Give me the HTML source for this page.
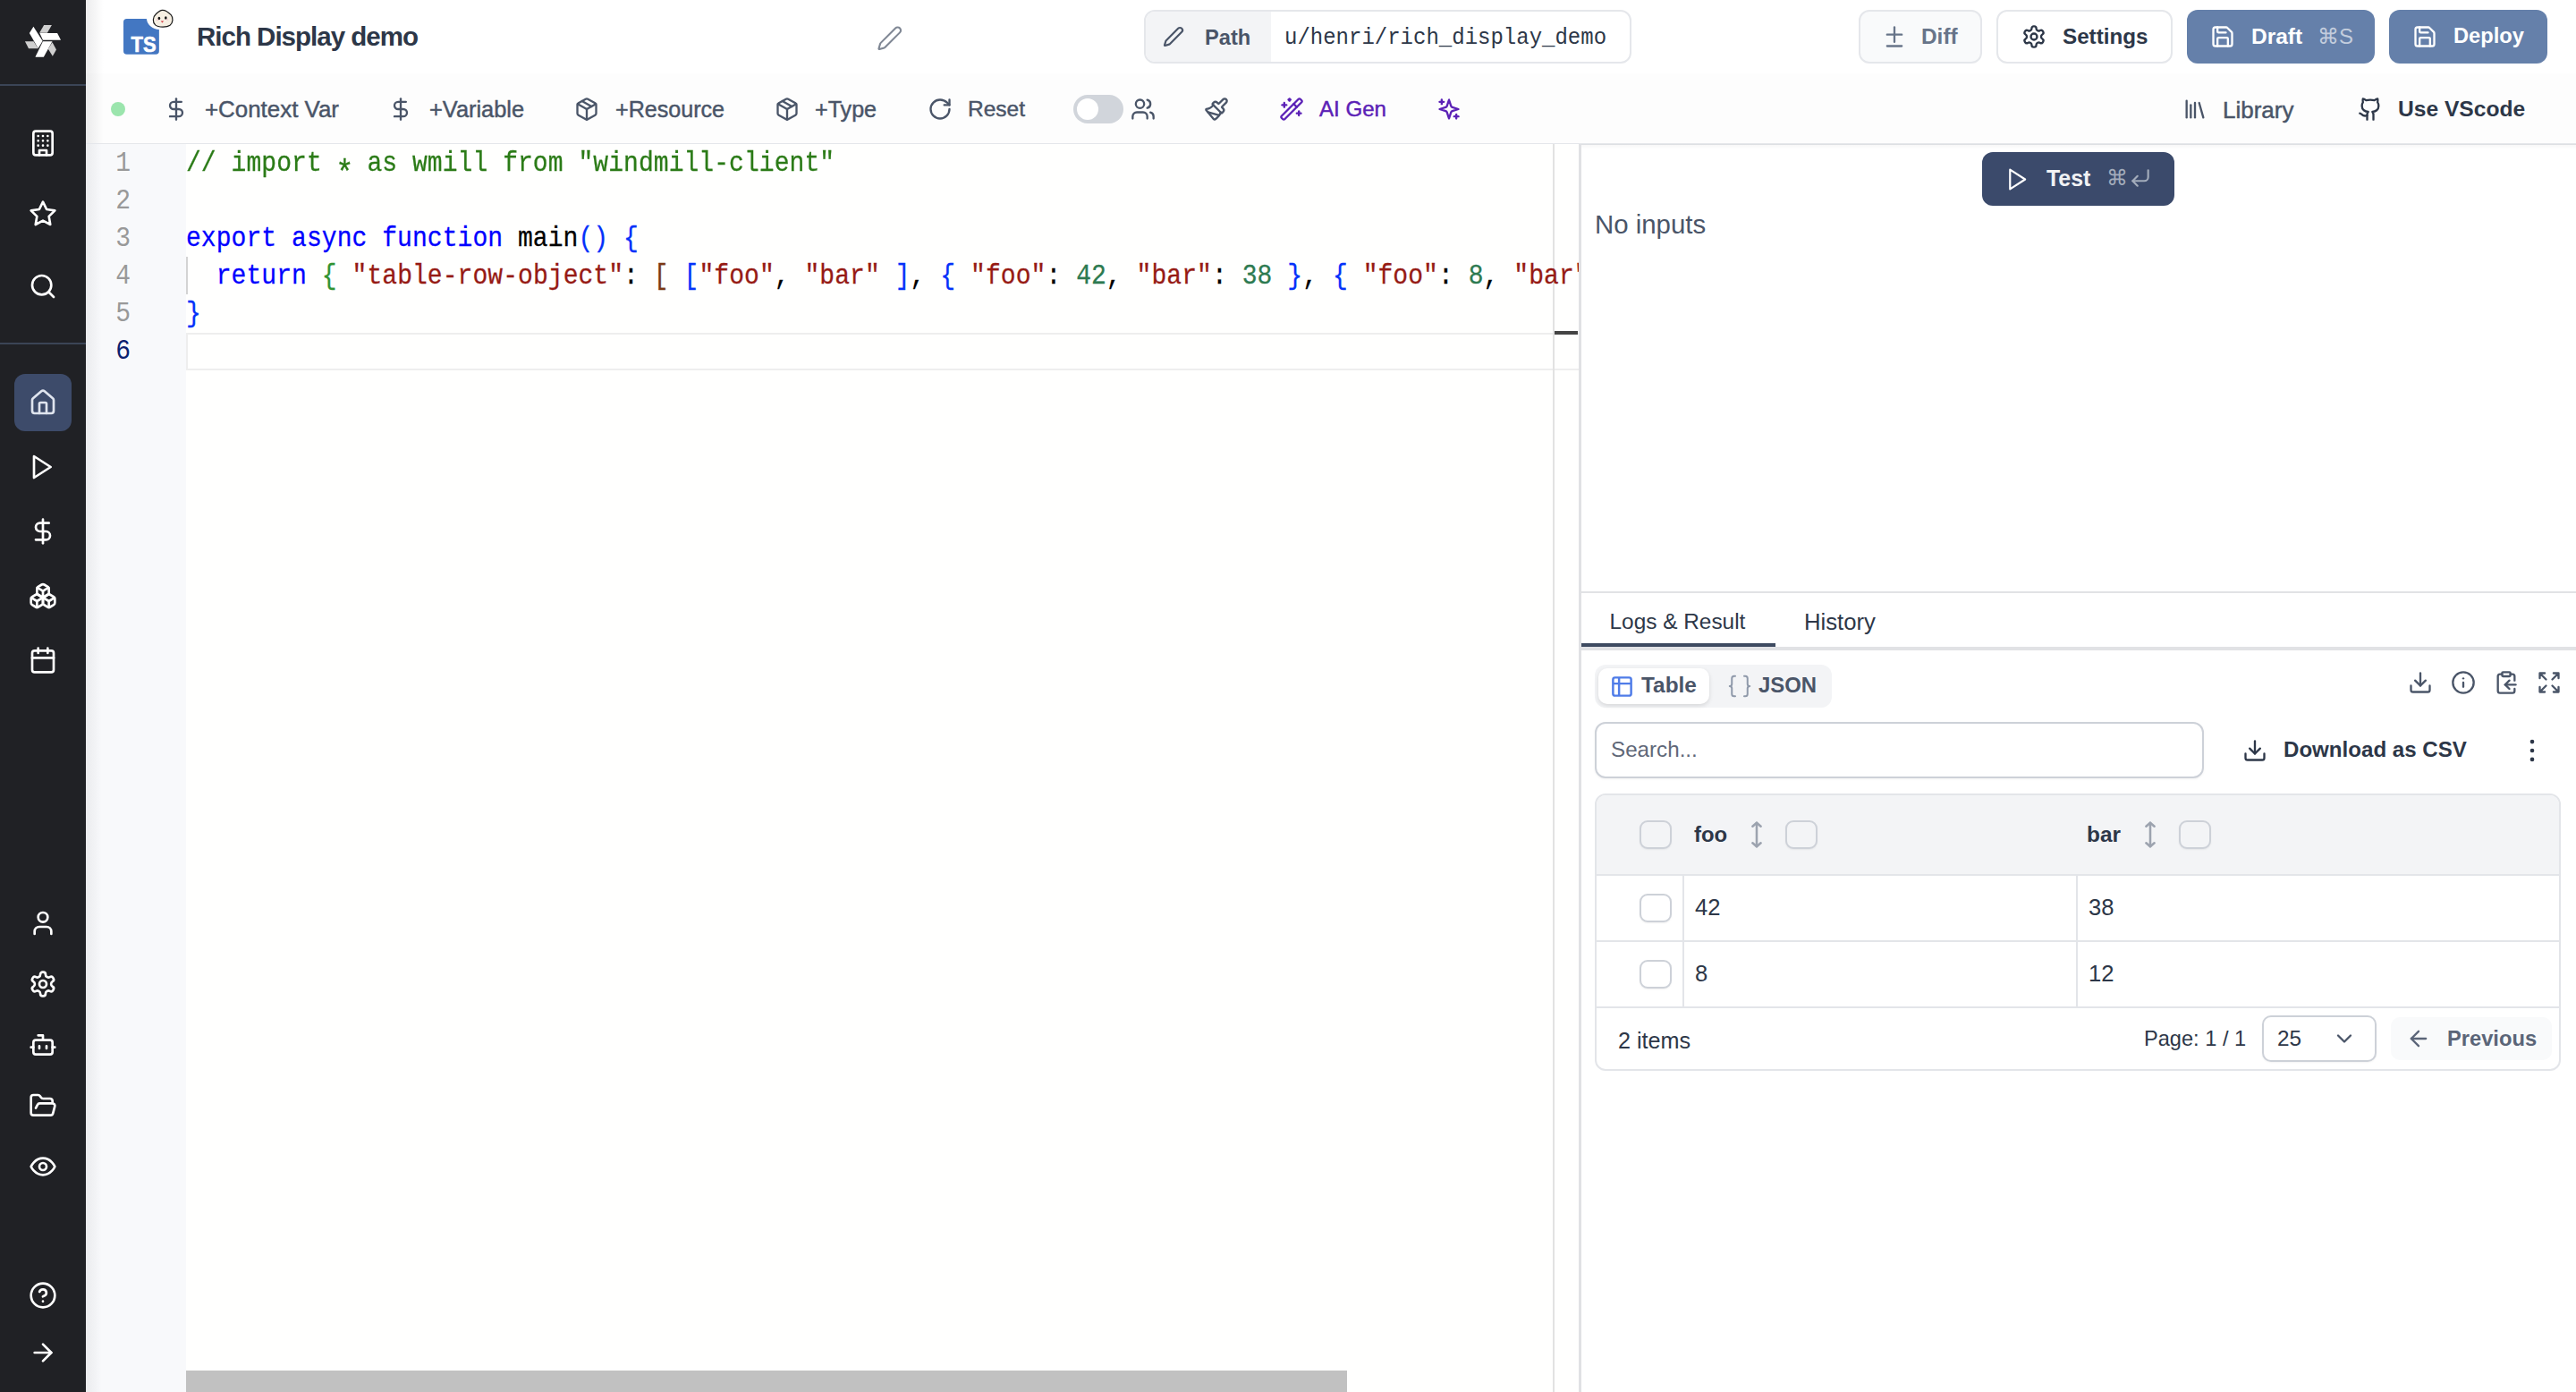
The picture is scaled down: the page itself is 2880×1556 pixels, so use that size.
<!DOCTYPE html>
<html><head><meta charset="utf-8">
<style>
*{box-sizing:border-box;margin:0;padding:0}
html,body{width:2880px;height:1556px;overflow:hidden;background:#fff;font-family:"Liberation Sans",sans-serif}
.a{position:absolute}
.t{position:absolute;white-space:nowrap;line-height:1}
.m{font-family:"Liberation Mono",monospace}
.b{font-weight:bold}
svg.i{position:absolute;fill:none;stroke:currentColor;stroke-linecap:round;stroke-linejoin:round}
</style></head><body>
<!-- SIDEBAR -->
<div class="a" style="left:0;top:0;width:96px;height:1556px;background:#202125"></div>
<div class="a" style="left:96px;top:0;width:20px;height:1556px;background:linear-gradient(to right,rgba(20,20,30,0.08),rgba(20,20,30,0))"></div>
<div class="a" style="left:0;top:94px;width:96px;height:2px;background:#3b4556"></div>
<div class="a" style="left:0;top:383px;width:96px;height:2px;background:#3b4556"></div>
<svg class="a" style="left:20px;top:20px" width="56" height="52" viewBox="0 0 1499 1392">
<g stroke="none">
<polygon fill="#fff" points="465,262 740,688 605,908 345,455"/>
<polygon fill="#cfcfcf" points="780,212 1015,212 880,448 645,448"/>
<polygon fill="#fff" points="652,455 1180,455 1285,662 748,662"/>
<polygon fill="#cfcfcf" points="212,700 470,700 605,915 322,915"/>
<polygon fill="#fff" points="748,705 1030,705 772,1172 520,1172"/>
<polygon fill="#cfcfcf" points="1030,730 1150,950 1040,1142 905,928"/>
</g></svg>
<svg class="i" style="left:32px;top:144px;color:#fff" width="32" height="32" viewBox="0 0 24 24" stroke-width="2"><rect width="16" height="20" x="4" y="2" rx="2" ry="2"/><path d="M9 22v-4h6v4"/><path d="M8 6h.01M16 6h.01M12 6h.01M12 10h.01M12 14h.01M16 10h.01M16 14h.01M8 10h.01M8 14h.01"/></svg>
<svg class="i" style="left:32px;top:223px;color:#fff" width="32" height="32" viewBox="0 0 24 24" stroke-width="2"><polygon points="12 2 15.09 8.26 22 9.27 17 14.14 18.18 21.02 12 17.77 5.82 21.02 7 14.14 2 9.27 8.91 8.26 12 2"/></svg>
<svg class="i" style="left:32px;top:304px;color:#fff" width="32" height="32" viewBox="0 0 24 24" stroke-width="2"><circle cx="11" cy="11" r="8"/><path d="m21 21-4.3-4.3"/></svg>
<div class="a" style="left:16px;top:418px;width:64px;height:64px;border-radius:12px;background:#3d4b6a"></div>
<svg class="i" style="left:32px;top:434px;color:#dfe4ee" width="32" height="32" viewBox="0 0 24 24" stroke-width="2"><path d="M15 21v-8a1 1 0 0 0-1-1h-4a1 1 0 0 0-1 1v8"/><path d="M3 10a2 2 0 0 1 .709-1.528l7-5.999a2 2 0 0 1 2.582 0l7 5.999A2 2 0 0 1 21 10v9a2 2 0 0 1-2 2H5a2 2 0 0 1-2-2z"/></svg>
<svg class="i" style="left:30px;top:506px;color:#fff" width="32" height="32" viewBox="0 0 24 24" stroke-width="2"><polygon points="6 3 20 12 6 21 6 3"/></svg>
<svg class="i" style="left:32px;top:578px;color:#fff" width="32" height="32" viewBox="0 0 24 24" stroke-width="2"><line x1="12" x2="12" y1="2" y2="22"/><path d="M17 5H9.5a3.5 3.5 0 0 0 0 7h5a3.5 3.5 0 0 1 0 7H6"/></svg>
<svg class="i" style="left:32px;top:650px;color:#fff" width="32" height="32" viewBox="0 0 24 24" stroke-width="2"><path d="M2.97 12.92A2 2 0 0 0 2 14.63v3.24a2 2 0 0 0 .97 1.710l3 1.8a2 2 0 0 0 2.06 0L12 19v-5.5l-5-3-4.03 2.42Z"/><path d="m7 16.5-4.74-2.85"/><path d="m7 16.5 5-3"/><path d="M7 16.5v5.17"/><path d="M12 13.5V19l3.97 2.38a2 2 0 0 0 2.06 0l3-1.8a2 2 0 0 0 .97-1.71v-3.24a2 2 0 0 0-.97-1.71L17 10.5l-5 3Z"/><path d="m17 16.5-5-3"/><path d="m17 16.5 4.74-2.85"/><path d="M17 16.5v5.17"/><path d="M7.97 4.42A2 2 0 0 0 7 6.130v4.37l5 3 5-3V6.13a2 2 0 0 0-.97-1.71l-3-1.8a2 2 0 0 0-2.06 0l-3 1.8Z"/><path d="M12 8 7.26 5.15"/><path d="m12 8 4.74-2.85"/><path d="M12 13.5V8"/></svg>
<svg class="i" style="left:32px;top:722px;color:#fff" width="32" height="32" viewBox="0 0 24 24" stroke-width="2"><rect width="18" height="18" x="3" y="4" rx="2" ry="2"/><line x1="16" x2="16" y1="2" y2="6"/><line x1="8" x2="8" y1="2" y2="6"/><line x1="3" x2="21" y1="10" y2="10"/></svg>
<svg class="i" style="left:32px;top:1016px;color:#fff" width="32" height="32" viewBox="0 0 24 24" stroke-width="2"><path d="M19 21v-2a4 4 0 0 0-4-4H9a4 4 0 0 0-4 4v2"/><circle cx="12" cy="7" r="4"/></svg>
<svg class="i" style="left:32px;top:1084px;color:#fff" width="32" height="32" viewBox="0 0 24 24" stroke-width="2"><path d="M12.22 2h-.44a2 2 0 0 0-2 2v.18a2 2 0 0 1-1 1.73l-.43.25a2 2 0 0 1-2 0l-.15-.08a2 2 0 0 0-2.73.73l-.22.38a2 2 0 0 0 .73 2.73l.15.1a2 2 0 0 1 1 1.72v.51a2 2 0 0 1-1 1.74l-.15.09a2 2 0 0 0-.73 2.730l.22.38a2 2 0 0 0 2.73.73l.15-.08a2 2 0 0 1 2 0l.43.25a2 2 0 0 1 1 1.73V20a2 2 0 0 0 2 2h.44a2 2 0 0 0 2-2v-.18a2 2 0 0 1 1-1.73l.43-.25a2 2 0 0 1 2 0l.15.08a2 2 0 0 0 2.73-.73l.22-.39a2 2 0 0 0-.73-2.73l-.15-.08a2 2 0 0 1-1-1.74v-.5a2 2 0 0 1 1-1.74l.15-.09a2 2 0 0 0 .73-2.73l-.22-.38a2 2 0 0 0-2.73-.73l-.15.08a2 2 0 0 1-2 0l-.43-.25a2 2 0 0 1-1-1.73V4a2 2 0 0 0-2-2z"/><circle cx="12" cy="12" r="3"/></svg>
<svg class="i" style="left:32px;top:1152px;color:#fff" width="32" height="32" viewBox="0 0 24 24" stroke-width="2"><path d="M12 8V4H8"/><rect width="16" height="12" x="4" y="8" rx="2"/><path d="M2 14h2M20 14h2M15 13v2M9 13v2"/></svg>
<svg class="i" style="left:32px;top:1220px;color:#fff" width="32" height="32" viewBox="0 0 24 24" stroke-width="2"><path d="m6 14 1.5-2.9A2 2 0 0 1 9.24 10H20a2 2 0 0 1 1.94 2.5l-1.54 6a2 2 0 0 1-1.95 1.5H4a2 2 0 0 1-2-2V5a2 2 0 0 1 2-2h3.9a2 2 0 0 1 1.69.9l.81 1.2a2 2 0 0 0 1.67.9H18a2 2 0 0 1 2 2v2"/></svg>
<svg class="i" style="left:32px;top:1288px;color:#fff" width="32" height="32" viewBox="0 0 24 24" stroke-width="2"><path d="M2 12s3-7 10-7 10 7 10 7-3 7-10 7-10-7-10-7Z"/><circle cx="12" cy="12" r="3"/></svg>
<svg class="i" style="left:32px;top:1432px;color:#fff" width="32" height="32" viewBox="0 0 24 24" stroke-width="2"><circle cx="12" cy="12" r="10"/><path d="M9.09 9a3 3 0 0 1 5.83 1c0 2-3 3-3 3"/><path d="M12 17h.01"/></svg>
<svg class="i" style="left:32px;top:1496px;color:#fff" width="32" height="32" viewBox="0 0 24 24" stroke-width="2"><path d="M5 12h14"/><path d="m12 5 7 7-7 7"/></svg>
<!-- HEADER -->
<svg class="a" style="left:130px;top:5px" width="70" height="65" viewBox="0 0 1499 1392">
<path fill="#4377c2" d="M252,340 H725 A300,300 0 0 0 1025,600 V1115 A80,80 0 0 1 945,1195 H252 A80,80 0 0 1 172,1115 V420 A80,80 0 0 1 252,340 Z"/>
<text x="355" y="1130" fill="#fff" font-family="Liberation Sans" font-weight="bold" font-size="520" textLength="600" lengthAdjust="spacingAndGlyphs" stroke="#fff" stroke-width="14">TS</text>
<path d="M1100,135 C1170,130 1250,185 1310,250 C1370,315 1360,440 1285,500 C1215,550 1010,555 935,490 C865,425 870,300 945,235 C1000,185 1040,140 1100,135 Z" fill="#f6efe2" stroke="#1a1a1a" stroke-width="26"/>
<ellipse cx="1025" cy="330" rx="28" ry="38" fill="#111"/>
<ellipse cx="1185" cy="322" rx="28" ry="38" fill="#111"/>
<path d="M1065,395 L1140,395 L1100,440 Z" fill="#d4323a"/>
<ellipse cx="985" cy="370" rx="30" ry="14" fill="#f3c3cf"/>
<ellipse cx="1220" cy="362" rx="30" ry="14" fill="#f3c3cf"/>
</svg>
<div class="t b" style="left:220px;top:25.8px;font-size:29.5px;letter-spacing:-1px;color:#2d3748">Rich Display demo</div>
<svg class="i" style="left:979.5px;top:28px;color:#7f8794" width="29.5" height="29.5" viewBox="0 0 24 24" stroke-width="1.7"><path d="M21.174 6.812a1 1 0 0 0-3.986-3.987L3.842 16.174a2 2 0 0 0-.5.83l-1.321 4.352a.5.5 0 0 0 .623.622l4.353-1.32a2 2 0 0 0 .83-.497z"/></svg>

<!-- path field -->
<div class="a" style="left:1279px;top:11px;width:545px;height:60px;border:2px solid #e5e7eb;border-radius:12px;background:#fff;overflow:hidden">
  <div class="a" style="left:0;top:0;width:140px;height:56px;background:#f3f4f6"></div>
</div>
<svg class="i" style="left:1300px;top:29px;color:#4a5568" width="24" height="24" viewBox="0 0 24 24" stroke-width="2.2"><path d="M21.174 6.812a1 1 0 0 0-3.986-3.987L3.842 16.174a2 2 0 0 0-.5.83l-1.321 4.352a.5.5 0 0 0 .623.622l4.353-1.32a2 2 0 0 0 .83-.497z"/></svg>
<div class="t b" style="left:1347px;top:30.5px;font-size:23.7px;color:#4a5568">Path</div>
<div class="t m" style="left:1436px;top:30.5px;font-size:24px;color:#2d3748;transform-origin:0 18.4px;transform:scaleY(1.1)">u/henri/rich_display_demo</div>

<!-- buttons -->
<div class="a" style="left:2078px;top:11px;width:138px;height:60px;border:2px solid #e5e7eb;border-radius:12px;background:#f9fafb"></div>
<svg class="i" style="left:2104px;top:27px;color:#677489" width="28" height="28" viewBox="0 0 24 24" stroke-width="2"><path d="M12 3v14"/><path d="M5 10h14"/><path d="M5 21h14"/></svg>
<div class="t b" style="left:2148px;top:29px;font-size:24.4px;color:#677489">Diff</div>

<div class="a" style="left:2232px;top:11px;width:197px;height:60px;border:2px solid #e5e7eb;border-radius:12px;background:#fff"></div>
<svg class="i" style="left:2260px;top:27px;color:#2d3748" width="28" height="28" viewBox="0 0 24 24" stroke-width="2"><path d="M12.22 2h-.44a2 2 0 0 0-2 2v.18a2 2 0 0 1-1 1.73l-.43.25a2 2 0 0 1-2 0l-.15-.08a2 2 0 0 0-2.73.73l-.22.38a2 2 0 0 0 .73 2.73l.15.1a2 2 0 0 1 1 1.72v.51a2 2 0 0 1-1 1.74l-.15.09a2 2 0 0 0-.73 2.730l.22.38a2 2 0 0 0 2.73.73l.15-.08a2 2 0 0 1 2 0l.43.25a2 2 0 0 1 1 1.73V20a2 2 0 0 0 2 2h.44a2 2 0 0 0 2-2v-.18a2 2 0 0 1 1-1.73l.43-.25a2 2 0 0 1 2 0l.15.08a2 2 0 0 0 2.73-.73l.22-.39a2 2 0 0 0-.73-2.73l-.15-.08a2 2 0 0 1-1-1.74v-.5a2 2 0 0 1 1-1.74l.15-.09a2 2 0 0 0 .73-2.73l-.22-.38a2 2 0 0 0-2.73-.73l-.15.08a2 2 0 0 1-2 0l-.43-.25a2 2 0 0 1-1-1.73V4a2 2 0 0 0-2-2z"/><circle cx="12" cy="12" r="3"/></svg>
<div class="t b" style="left:2306px;top:29px;font-size:24.2px;color:#2d3748">Settings</div>

<div class="a" style="left:2445px;top:11px;width:210px;height:60px;border-radius:12px;background:#6580aa"></div>
<svg class="i" style="left:2471px;top:27px;color:#fff" width="28" height="28" viewBox="0 0 24 24" stroke-width="2"><path d="M15.2 3a2 2 0 0 1 1.4.6l3.8 3.8a2 2 0 0 1 .6 1.4V19a2 2 0 0 1-2 2H5a2 2 0 0 1-2-2V5a2 2 0 0 1 2-2z"/><path d="M17 21v-7a1 1 0 0 0-1-1H8a1 1 0 0 0-1 1v7"/><path d="M7 3v4a1 1 0 0 0 1 1h7"/></svg>
<div class="t b" style="left:2517px;top:29px;font-size:24.5px;color:#fff">Draft</div>
<div class="t" style="left:2591px;top:29px;font-size:24px;color:#c3cddd">&#8984;S</div>

<div class="a" style="left:2671px;top:11px;width:177px;height:60px;border-radius:12px;background:#6580aa"></div>
<svg class="i" style="left:2697px;top:27px;color:#fff" width="28" height="28" viewBox="0 0 24 24" stroke-width="2"><path d="M15.2 3a2 2 0 0 1 1.4.6l3.8 3.8a2 2 0 0 1 .6 1.4V19a2 2 0 0 1-2 2H5a2 2 0 0 1-2-2V5a2 2 0 0 1 2-2z"/><path d="M17 21v-7a1 1 0 0 0-1-1H8a1 1 0 0 0-1 1v7"/><path d="M7 3v4a1 1 0 0 0 1 1h7"/></svg>
<div class="t b" style="left:2743px;top:29px;font-size:23.7px;color:#fff">Deploy</div>
<!-- TOOLBAR -->
<div class="a" style="left:96px;top:82px;width:2784px;height:78px;background:#fdfdfd"></div>
<div class="a" style="left:96px;top:82px;width:20px;height:78px;background:linear-gradient(to right,rgba(20,20,30,0.08),rgba(20,20,30,0))"></div>
<div class="a" style="left:124px;top:114px;width:16px;height:16px;border-radius:50%;background:#9be5ad"></div>
<svg class="i" style="left:182.6px;top:108px;color:#4a5568" width="28" height="28" viewBox="0 0 24 24" stroke-width="2"><line x1="12" x2="12" y1="2" y2="22"/><path d="M17 5H9.5a3.5 3.5 0 0 0 0 7h5a3.5 3.5 0 0 1 0 7H6"/></svg>
<div class="t" style="-webkit-text-stroke:0.45px currentColor;left:229px;top:110px;font-size:25.9px;color:#4a5568">+Context Var</div>
<svg class="i" style="left:434.3px;top:108px;color:#4a5568" width="28" height="28" viewBox="0 0 24 24" stroke-width="2"><line x1="12" x2="12" y1="2" y2="22"/><path d="M17 5H9.5a3.5 3.5 0 0 0 0 7h5a3.5 3.5 0 0 1 0 7H6"/></svg>
<div class="t" style="-webkit-text-stroke:0.45px currentColor;left:480px;top:110px;font-size:25.4px;color:#4a5568">+Variable</div>
<svg class="i" style="left:642px;top:108px;color:#4a5568" width="28" height="28" viewBox="0 0 24 24" stroke-width="2"><path d="m7.5 4.27 9 5.15"/><path d="M21 8a2 2 0 0 0-1-1.73l-7-4a2 2 0 0 0-2 0l-7 4A2 2 0 0 0 3 8v8a2 2 0 0 0 1 1.73l7 4a2 2 0 0 0 2 0l7-4A2 2 0 0 0 21 16Z"/><path d="m3.3 7 8.7 5 8.7-5"/><path d="M12 22V12"/></svg>
<div class="t" style="-webkit-text-stroke:0.45px currentColor;left:688px;top:110px;font-size:25.1px;color:#4a5568">+Resource</div>
<svg class="i" style="left:866px;top:108px;color:#4a5568" width="28" height="28" viewBox="0 0 24 24" stroke-width="2"><path d="m7.5 4.27 9 5.15"/><path d="M21 8a2 2 0 0 0-1-1.73l-7-4a2 2 0 0 0-2 0l-7 4A2 2 0 0 0 3 8v8a2 2 0 0 0 1 1.73l7 4a2 2 0 0 0 2 0l7-4A2 2 0 0 0 21 16Z"/><path d="m3.3 7 8.7 5 8.7-5"/><path d="M12 22V12"/></svg>
<div class="t" style="-webkit-text-stroke:0.45px currentColor;left:911px;top:110px;font-size:25.1px;color:#4a5568">+Type</div>
<svg class="i" style="left:1037px;top:108px;color:#4a5568" width="28" height="28" viewBox="0 0 24 24" stroke-width="2"><path d="M21 12a9 9 0 1 1-9-9c2.52 0 4.93 1 6.74 2.74L21 8"/><path d="M21 3v5h-5"/></svg>
<div class="t" style="-webkit-text-stroke:0.45px currentColor;left:1082px;top:110px;font-size:24.5px;color:#4a5568">Reset</div>
<div class="a" style="left:1200px;top:106px;width:56px;height:32px;border-radius:16px;background:#d1d5db"></div>
<div class="a" style="left:1204px;top:110px;width:24px;height:24px;border-radius:50%;background:#fff"></div>
<svg class="i" style="left:1264px;top:108px;color:#4a5568" width="28" height="28" viewBox="0 0 24 24" stroke-width="2"><path d="M16 21v-2a4 4 0 0 0-4-4H6a4 4 0 0 0-4 4v2"/><circle cx="9" cy="7" r="4"/><path d="M22 21v-2a4 4 0 0 0-3-3.87"/><path d="M16 3.13a4 4 0 0 1 0 7.75"/></svg>
<svg class="i" style="left:1346px;top:108px;color:#4a5568" width="28" height="28" viewBox="0 0 24 24" stroke-width="2"><path d="m14.622 17.897-10.68-2.913"/><path d="M18.376 2.622a1 1 0 1 1 3.002 3.002L17.36 9.643a.5.5 0 0 0 0 .707l.944.944a2.41 2.41 0 0 1 0 3.408l-.944.944a.5.5 0 0 1-.707 0L8.354 7.348a.5.5 0 0 1 0-.707l.944-.944a2.41 2.41 0 0 1 3.408 0l.944.944a.5.5 0 0 0 .707 0z"/><path d="M9 8c-1.804 2.71-3.97 3.46-6.583 3.948a.507.507 0 0 0-.302.819l7.32 8.883a1 1 0 0 0 1.185.204C12.735 20.405 16 16.792 16 15"/></svg>
<svg class="i" style="left:1430px;top:108px;color:#5b21b6" width="28" height="28" viewBox="0 0 24 24" stroke-width="2"><path d="m21.64 3.64-1.28-1.28a1.21 1.21 0 0 0-1.72 0L2.36 18.64a1.21 1.21 0 0 0 0 1.72l1.28 1.28a1.2 1.2 0 0 0 1.72 0L21.64 5.36a1.2 1.2 0 0 0 0-1.72"/><path d="m14 7 3 3"/><path d="M5 6v4"/><path d="M19 14v4"/><path d="M10 2v2"/><path d="M7 8H3"/><path d="M21 16h-4"/><path d="M11 3H9"/></svg>
<div class="t" style="-webkit-text-stroke:0.45px currentColor;left:1475px;top:110px;font-size:24.1px;color:#5b21b6">AI Gen</div>
<svg class="i" style="left:1606px;top:108px;color:#5b21b6" width="28" height="28" viewBox="0 0 24 24" stroke-width="2"><path d="m12 3-1.912 5.813a2 2 0 0 1-1.275 1.275L3 12l5.813 1.912a2 2 0 0 1 1.275 1.275L12 21l1.912-5.813a2 2 0 0 1 1.275-1.275L21 12l-5.813-1.912a2 2 0 0 1-1.275-1.275L12 3Z"/><path d="M5 3v4"/><path d="M19 17v4"/><path d="M3 5h4"/><path d="M17 19h4"/></svg>

<svg class="i" style="left:2439.5px;top:108px;color:#4a5568" width="28" height="28" viewBox="0 0 24 24" stroke-width="2"><path d="m16 6 4 14"/><path d="M12 6v14"/><path d="M8 8v12"/><path d="M4 4v16"/></svg>
<div class="t" style="-webkit-text-stroke:0.45px currentColor;left:2485px;top:110px;font-size:26px;color:#4a5568">Library</div>
<svg class="i" style="left:2636px;top:108px;color:#2d3748" width="28" height="28" viewBox="0 0 24 24" stroke-width="2"><path d="M15 22v-4a4.8 4.8 0 0 0-1-3.5c3 0 6-2 6-5.5.08-1.25-.27-2.48-1-3.5.28-1.15.28-2.35 0-3.5 0 0-1 0-3 1.5-2.64-.5-5.36-.5-8 0C6 2 5 2 5 2c-.3 1.15-.3 2.35 0 3.5A5.403 5.403 0 0 0 4 9c0 3.5 3 5.5 6 5.5-.39.49-.68 1.050-.85 1.65-.17.6-.22 1.23-.15 1.85v4"/><path d="M9 18c-4.51 2-5-2-7-2"/></svg>
<div class="t b" style="left:2681px;top:110px;font-size:24.6px;color:#2d3748">Use VScode</div>
<div class="a" style="left:96px;top:160px;width:2784px;height:2px;background:#e5e7eb"></div>
<!-- EDITOR -->
<style>
.ln{position:absolute;left:94px;width:52px;height:42px;font-family:"Liberation Mono",monospace;font-size:28px;line-height:42px;padding-top:2.3px;text-align:right;color:#999;transform-origin:0 30.8px;transform:scaleY(1.13)}
.cl{position:absolute;left:0;height:42px;font-family:"Liberation Mono",monospace;font-size:28px;line-height:42px;padding-top:2.3px;letter-spacing:0.06px;white-space:pre;color:#000;transform-origin:0 30.8px;transform:scaleY(1.15);-webkit-text-stroke:0.25px currentColor}
.cm{color:#2b7b17}.kw{color:#0000ff}.st{color:#961a14}.nu{color:#2d7a50}.b1{color:#0431fa}.b2{color:#319331}.b3{color:#7b3814}
</style>
<div class="a" style="left:96px;top:161px;width:112px;height:1395px;background:#f8f9fb"></div>
<div class="a" style="left:96px;top:161px;width:18px;height:1395px;background:linear-gradient(to right,rgba(20,20,30,0.06),rgba(20,20,30,0))"></div>
<div class="a" style="left:208px;top:161px;width:1557px;height:1395px;background:#fffffe"></div>
<div class="ln" style="top:161px">1</div>
<div class="ln" style="top:203px">2</div>
<div class="ln" style="top:245px">3</div>
<div class="ln" style="top:287px">4</div>
<div class="ln" style="top:329px">5</div>
<div class="ln" style="top:371px;color:#0b216f">6</div>
<div class="a" style="left:208px;top:372px;width:1557px;height:42px;border:2px solid #eeeeee;border-right:none"></div>
<div class="a" style="left:208px;top:287px;width:2px;height:42px;background:#d3d3d3"></div>
<div class="a" style="left:1736px;top:161px;width:2px;height:1395px;background:#e2e2e2"></div>
<div class="a" style="left:208px;top:161px;width:1557px;height:300px;overflow:hidden">
<div class="cl" style="top:0"><span class="cm">// import <span style="display:inline-block;transform:translateY(11px) scale(1.2)">*</span> as wmill from "windmill-client"</span></div>
<div class="cl" style="top:84px"><span class="kw">export async function</span> main<span class="b1">() {</span></div>
<div class="cl" style="top:126px">  <span class="kw">return</span> <span class="b2">{</span> <span class="st">"table-row-object"</span>: <span class="b3">[</span> <span class="b1">[</span><span class="st">"foo"</span>, <span class="st">"bar"</span> <span class="b1">]</span>, <span class="b1">{</span> <span class="st">"foo"</span>: <span class="nu">42</span>, <span class="st">"bar"</span>: <span class="nu">38</span> <span class="b1">}</span>, <span class="b1">{</span> <span class="st">"foo"</span>: <span class="nu">8</span>, <span class="st">"bar"</span>: <span class="nu">12</span> <span class="b1">}</span> <span class="b3">]</span> <span class="b2">}</span></div>
<div class="cl" style="top:168px"><span class="b1">}</span></div>
</div>
<div class="a" style="left:1738px;top:370px;width:26px;height:4px;background:#444"></div>
<div class="a" style="left:208px;top:1532px;width:1298px;height:24px;background:#c1c1c1"></div>
<div class="a" style="left:1765px;top:161px;width:3px;height:1395px;background:#e0e1e4"></div>
<!-- RIGHT PANEL -->
<div class="a" style="left:1768px;top:161px;width:1112px;height:6px;background:linear-gradient(to bottom,rgba(0,0,0,0.035),rgba(0,0,0,0))"></div>
<div class="a" style="left:2216px;top:170px;width:215px;height:60px;border-radius:12px;background:#3b4a6b"></div>
<svg class="i" style="left:2240.3px;top:185.5px;color:#fff" width="29" height="29" viewBox="0 0 24 24" stroke-width="1.8"><polygon points="6 3 20 12 6 21 6 3"/></svg>
<div class="t b" style="left:2288px;top:187px;font-size:24.9px;color:#f1f2f4">Test</div>
<div class="t" style="left:2355px;top:187px;font-size:24px;color:#a3acbb">&#8984;</div>
<svg class="i" style="left:2380px;top:186px;color:#a3acbb" width="26" height="26" viewBox="0 0 24 24" stroke-width="2"><polyline points="9 10 4 15 9 20"/><path d="M20 4v7a4 4 0 0 1-4 4H4"/></svg>
<div class="t" style="left:1783px;top:235.5px;font-size:29.4px;color:#4a5568">No inputs</div>

<div class="a" style="left:1768px;top:661px;width:1112px;height:2px;background:#e1e2e5"></div>
<div class="t" style="left:1799.5px;top:682.5px;font-size:24.4px;color:#2d3748">Logs &amp; Result</div>
<div class="t" style="left:2017px;top:682.5px;font-size:25.7px;color:#2d3748">History</div>
<div class="a" style="left:1768px;top:723px;width:1112px;height:4px;background:#e1e2e5"></div>
<div class="a" style="left:1768px;top:719px;width:217px;height:4px;background:#3d4a60"></div>

<div class="a" style="left:1783px;top:743px;width:265px;height:48px;border-radius:12px;background:#f3f4f6"></div>
<div class="a" style="left:1787px;top:747px;width:124px;height:40px;border-radius:10px;background:#fff;box-shadow:0 2px 5px rgba(0,0,0,0.12)"></div>
<svg class="i" style="left:1799.5px;top:753.5px;color:#4f7ce8" width="27" height="27" viewBox="0 0 24 24" stroke-width="2.2"><path d="M9 3H5a2 2 0 0 0-2 2v4m6-6h10a2 2 0 0 1 2 2v4M9 3v18m0 0h10a2 2 0 0 0 2-2V9M9 21H5a2 2 0 0 1-2-2V9m0 0h18"/></svg>
<div class="t b" style="left:1835px;top:754px;font-size:24.4px;color:#4a5568">Table</div>
<svg class="i" style="left:1930px;top:752px;color:#8f99aa" width="30" height="30" viewBox="0 0 24 24" stroke-width="1.6"><path d="M8 3H7a2 2 0 0 0-2 2v5a2 2 0 0 1-2 2 2 2 0 0 1 2 2v5c0 1.1.9 2 2 2h1"/><path d="M16 21h1a2 2 0 0 0 2-2v-5c0-1.1.9-2 2-2a2 2 0 0 1-2-2V5a2 2 0 0 0-2-2h-1"/></svg>
<div class="t b" style="left:1966px;top:754px;font-size:23.9px;color:#4a5568">JSON</div>

<svg class="i" style="left:2692px;top:749px;color:#4a5568" width="28" height="28" viewBox="0 0 24 24" stroke-width="2"><path d="M21 15v4a2 2 0 0 1-2 2H5a2 2 0 0 1-2-2v-4"/><polyline points="7 10 12 15 17 10"/><line x1="12" x2="12" y1="15" y2="3"/></svg>
<svg class="i" style="left:2740px;top:749px;color:#4a5568" width="28" height="28" viewBox="0 0 24 24" stroke-width="2"><circle cx="12" cy="12" r="10"/><path d="M12 16v-4"/><path d="M12 8h.01"/></svg>
<svg class="i" style="left:2788px;top:749px;color:#4a5568" width="28" height="28" viewBox="0 0 24 24" stroke-width="2"><rect width="8" height="4" x="8" y="2" rx="1" ry="1"/><path d="M8 4H6a2 2 0 0 0-2 2v14a2 2 0 0 0 2 2h12a2 2 0 0 0 2-2v-2"/><path d="M16 4h2a2 2 0 0 1 2 2v4"/><path d="M21 14H11"/><path d="m15 10-4 4 4 4"/></svg>
<svg class="i" style="left:2836px;top:749px;color:#4a5568" width="28" height="28" viewBox="0 0 24 24" stroke-width="2"><path d="m21 21-6-6m6 6v-4.8m0 4.8h-4.8"/><path d="M3 16.2V21m0 0h4.8M3 21l6-6"/><path d="M21 7.8V3m0 0h-4.8M21 3l-6 6"/><path d="M3 7.8V3m0 0h4.8M3 3l6 6"/></svg>

<div class="a" style="left:1783px;top:807px;width:681px;height:63px;border:2px solid #cdd1d8;border-radius:12px;background:#fff;box-shadow:0 1px 3px rgba(0,0,0,0.05)"></div>
<div class="t" style="left:1801px;top:826px;font-size:24.2px;color:#5f6878">Search...</div>
<svg class="i" style="left:2507px;top:825px;color:#2d3748" width="28" height="28" viewBox="0 0 24 24" stroke-width="2"><path d="M21 15v4a2 2 0 0 1-2 2H5a2 2 0 0 1-2-2v-4"/><polyline points="7 10 12 15 17 10"/><line x1="12" x2="12" y1="15" y2="3"/></svg>
<div class="t b" style="left:2553px;top:826px;font-size:24.1px;color:#2d3748">Download as CSV</div>
<svg class="a" style="left:2817px;top:825px" width="28" height="28" viewBox="0 0 24 24"><circle cx="12" cy="3.5" r="2" fill="#2d3748"/><circle cx="12" cy="12" r="2" fill="#2d3748"/><circle cx="12" cy="20.5" r="2" fill="#2d3748"/></svg>

<!-- TABLE -->
<div class="a" style="left:1783px;top:887px;width:1080px;height:310px;border:2px solid #e3e5e9;border-radius:12px;background:#fff;overflow:hidden">
  <div class="a" style="left:0;top:0;width:1076px;height:88px;background:#f3f4f6"></div>
  <div class="a" style="left:0;top:88px;width:1076px;height:2px;background:#e3e5e9"></div>
  <div class="a" style="left:0;top:162px;width:1076px;height:2px;background:#e3e5e9"></div>
  <div class="a" style="left:0;top:236px;width:1076px;height:2px;background:#e3e5e9"></div>
  <div class="a" style="left:96px;top:90px;width:2px;height:146px;background:#e3e5e9"></div>
  <div class="a" style="left:536px;top:90px;width:2px;height:146px;background:#e3e5e9"></div>
</div>
<div class="a" style="left:1833px;top:917px;width:36px;height:32px;border:2px solid #cdd1d8;border-radius:9px;background:#f3f4f6;box-shadow:0 1px 2px rgba(0,0,0,0.06)"></div>
<div class="t b" style="left:1894px;top:921px;font-size:23.9px;color:#2d3748">foo</div>
<svg class="i" style="left:1950px;top:918px;color:#9ca3af" width="28" height="30" viewBox="0 0 24 26" stroke-width="2.2"><polyline points="8 5 12 1.5 16 5"/><polyline points="8 21 12 24.5 16 21"/><line x1="12" x2="12" y1="1.5" y2="24.5"/></svg>
<div class="a" style="left:1996px;top:917px;width:36px;height:32px;border:2px solid #cdd1d8;border-radius:9px;background:#f3f4f6;box-shadow:0 1px 2px rgba(0,0,0,0.06)"></div>
<div class="t b" style="left:2333px;top:921px;font-size:24.4px;color:#2d3748">bar</div>
<svg class="i" style="left:2390px;top:918px;color:#9ca3af" width="28" height="30" viewBox="0 0 24 26" stroke-width="2.2"><polyline points="8 5 12 1.5 16 5"/><polyline points="8 21 12 24.5 16 21"/><line x1="12" x2="12" y1="1.5" y2="24.5"/></svg>
<div class="a" style="left:2436px;top:917px;width:36px;height:32px;border:2px solid #cdd1d8;border-radius:9px;background:#f3f4f6;box-shadow:0 1px 2px rgba(0,0,0,0.06)"></div>

<div class="a" style="left:1833px;top:999px;width:36px;height:32px;border:2px solid #cdd1d8;border-radius:9px;background:#fff;box-shadow:0 1px 2px rgba(0,0,0,0.06)"></div>
<div class="t" style="left:1895px;top:1002px;font-size:25.6px;color:#2d3748">42</div>
<div class="t" style="left:2335px;top:1002px;font-size:25.6px;color:#2d3748">38</div>
<div class="a" style="left:1833px;top:1073px;width:36px;height:32px;border:2px solid #cdd1d8;border-radius:9px;background:#fff;box-shadow:0 1px 2px rgba(0,0,0,0.06)"></div>
<div class="t" style="left:1895px;top:1076px;font-size:25.6px;color:#2d3748">8</div>
<div class="t" style="left:2335px;top:1076px;font-size:25.6px;color:#2d3748">12</div>

<div class="t" style="left:1809px;top:1150.5px;font-size:25.2px;color:#2d3748">2 items</div>
<div class="t" style="left:2397px;top:1149.5px;font-size:23.6px;color:#2d3748">Page: 1 / 1</div>
<div class="a" style="left:2529px;top:1135px;width:128px;height:52px;border:2px solid #cdd1d8;border-radius:10px;background:#fff;box-shadow:0 1px 2px rgba(0,0,0,0.05)"></div>
<div class="t" style="left:2546px;top:1148.5px;font-size:24.3px;color:#2d3748">25</div>
<svg class="i" style="left:2607px;top:1147px;color:#4a5568" width="28" height="28" viewBox="0 0 24 24" stroke-width="2"><path d="m6 9 6 6 6-6"/></svg>
<div class="a" style="left:2673px;top:1137px;width:180px;height:48px;border-radius:10px;background:#f9fafb"></div>
<svg class="i" style="left:2690px;top:1147px;color:#5b6578" width="28" height="28" viewBox="0 0 24 24" stroke-width="2"><path d="m12 19-7-7 7-7"/><path d="M19 12H5"/></svg>
<div class="t b" style="left:2736px;top:1150px;font-size:23.7px;color:#5b6578">Previous</div>

</body></html>
